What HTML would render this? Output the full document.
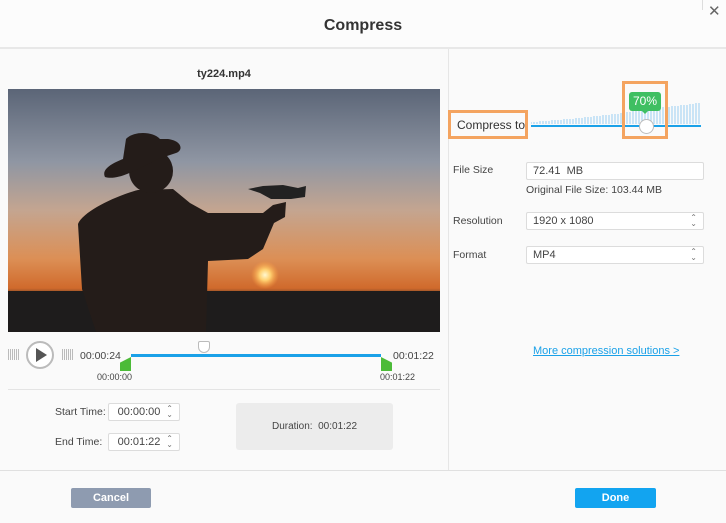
<!DOCTYPE html>
<html><head><meta charset="utf-8"><style>
*{box-sizing:border-box;margin:0;padding:0}
body{width:726px;height:523px;background:#fafafa;font-family:"Liberation Sans",sans-serif;position:relative;overflow:hidden;color:#333}
.a{position:absolute}
.t{font-size:10.5px;color:#444}
.in{position:absolute;background:#fff;border:1px solid #dcdcdc;border-radius:2px;font-size:11px;color:#444;padding-left:6px;line-height:16px}
.sp{position:absolute;right:6px;top:2px;font-size:8px;color:#777;line-height:6px}
</style></head><body>
<div class="a" style="left:0;top:0;width:726px;height:47px;background:#fcfcfc"></div>
<div class="a" style="left:702px;top:0;width:1px;height:10px;background:#ddd"></div>
<div class="a" style="left:708px;top:2px;font-size:15px;color:#666">✕</div>
<div class="a" style="left:0;top:17px;width:726px;text-align:center;font-size:16px;font-weight:bold;color:#333">Compress</div>
<div class="a" style="left:0;top:47px;width:726px;height:2px;background:#e8e8e8"></div>
<div class="a" style="left:448px;top:49px;width:1px;height:422px;background:#e6e6e6"></div>
<div class="a" style="left:0;top:470px;width:726px;height:1px;background:#e0e0e0"></div>
<div class="a" style="left:0;top:68px;width:448px;text-align:center;font-size:11px;font-weight:bold;color:#333">ty224.mp4</div>

<svg class="a" style="left:8px;top:89px" width="432" height="243" viewBox="0 0 432 243">
<defs><linearGradient id="g" x1="0" y1="0" x2="0" y2="1">
<stop offset="0" stop-color="#5b6577"/><stop offset="0.3" stop-color="#8f96a3"/><stop offset="0.5" stop-color="#c4a590"/><stop offset="0.7" stop-color="#dc8f55"/><stop offset="0.82" stop-color="#d06a2c"/><stop offset="0.86" stop-color="#3a2a22"/><stop offset="1" stop-color="#1c1a1a"/></linearGradient>
<radialGradient id="s"><stop offset="0" stop-color="#fff8d0"/><stop offset="0.4" stop-color="#ffd070"/><stop offset="1" stop-color="#ffa040" stop-opacity="0"/></radialGradient></defs>
<rect width="432" height="243" fill="url(#g)"/>
<rect y="202" width="432" height="41" fill="#1e1c1c"/>
<circle cx="257" cy="186" r="14" fill="url(#s)"/>
<path d="M70,135 C75,122 110,106 130,101 L165,100 L182,114 L200,124 L255,124 L265,116 L278,113 L277,128 L266,134 L255,160 L240,170 L200,172 L198,243 L88,243 L74,200 Z" fill="#241c19"/>
<ellipse cx="143" cy="82" rx="22" ry="22" fill="#241c19"/>
<path d="M97,88 C93,80 105,74 115,70 L118,50 C125,42 145,42 152,50 L160,50 C175,52 175,62 168,64 L150,70 C130,80 110,92 97,88 Z" fill="#241c19"/>
<path d="M240,100 L255,97 L275,96 L290,99 L298,97 L297,108 L283,110 L263,110 L252,104 Z" fill="#222"/>
</svg>

<div class="a" style="left:8px;top:349px;width:11px;height:11px;background:repeating-linear-gradient(90deg,#bbb 0 1px,transparent 1px 2px)"></div>
<div class="a" style="left:62px;top:349px;width:11px;height:11px;background:repeating-linear-gradient(90deg,#bbb 0 1px,transparent 1px 2px)"></div>
<div class="a" style="left:26px;top:341px;width:28px;height:28px;border-radius:50%;border:2px solid #bbb;background:#fff"></div>
<div class="a" style="left:36px;top:348px;width:0;height:0;border-left:11px solid #555;border-top:7px solid transparent;border-bottom:7px solid transparent"></div>
<div class="a t" style="left:80px;top:350px">00:00:24</div>
<div class="a t" style="left:393px;top:350px">00:01:22</div>
<div class="a" style="left:131px;top:354px;width:250px;height:3px;background:#1aa1e8"></div>
<div class="a" style="left:198px;top:341px;width:12px;height:12px;background:#fff;border:1px solid #bbb;border-radius:2px 2px 6px 6px"></div>
<div class="a" style="left:120px;top:357px;width:11px;height:14px;background:#4cbb38;clip-path:polygon(0 40%,100% 0,100% 100%,0 100%)"></div>
<div class="a" style="left:381px;top:357px;width:11px;height:14px;background:#4cbb38;clip-path:polygon(0 0,100% 40%,100% 100%,0 100%)"></div>
<div class="a t" style="left:97px;top:372px;font-size:9px">00:00:00</div>
<div class="a t" style="left:380px;top:372px;font-size:9px">00:01:22</div>
<div class="a" style="left:8px;top:389px;width:432px;height:1px;background:#e4e4e4"></div>
<div class="a t" style="left:55px;top:406px">Start Time:</div>
<div class="in" style="left:108px;top:403px;width:72px;height:18px;text-align:center;padding:0 10px 0 0">00:00:00<span class="sp">⌃<br>⌄</span></div>
<div class="a t" style="left:55px;top:436px">End Time:</div>
<div class="in" style="left:108px;top:433px;width:72px;height:18px;text-align:center;padding:0 10px 0 0">00:01:22<span class="sp">⌃<br>⌄</span></div>
<div class="a" style="left:236px;top:403px;width:157px;height:47px;background:#ececec;border-radius:3px;font-size:10px;color:#444;text-align:center;line-height:47px">Duration:&nbsp; 00:01:22</div>

<svg class="a" style="left:531px;top:98px" width="170" height="26">
<g stroke="#a9d5f2" stroke-width="1.2">
<path d="M0,26 V24 M3,26V24 M6,26V24 M9,26V23 M12,26V23 M15,26V23 M18,26V23 M21,26V22 M24,26V22 M27,26V22 M30,26V22 M33,26V21 M36,26V21 M39,26V21 M42,26V21 M45,26V20 M48,26V20 M51,26V20 M54,26V19 M57,26V19 M60,26V19 M63,26V18 M66,26V18 M69,26V18 M72,26V17 M75,26V17 M78,26V17 M81,26V16 M84,26V16 M87,26V16 M90,26V15 M93,26V15 M96,26V14 M99,26V14 M102,26V12 M105,26V12 M108,26V12 M111,26V12 M114,26V11 M117,26V11 M120,26V11 M123,26V10 M126,26V10 M129,26V10 M132,26V9 M135,26V9 M138,26V9 M141,26V8 M144,26V8 M147,26V8 M150,26V7 M153,26V7 M156,26V7 M159,26V6 M162,26V6 M165,26V5 M168,26V5"/></g></svg>
<div class="a" style="left:531px;top:125px;width:170px;height:2px;background:#1aa1e8"></div>
<div class="a" style="left:639px;top:119px;width:15px;height:15px;border-radius:50%;background:#fff;border:1px solid #bbb"></div>
<div class="a" style="left:629px;top:92px;width:32px;height:19px;background:#3fbf62;border-radius:3px;color:#fff;font-size:12px;text-align:center;line-height:19px">70%</div>
<div class="a" style="left:641px;top:110px;border-left:4px solid transparent;border-right:4px solid transparent;border-top:4px solid #3fbf62"></div>
<div class="a" style="left:448px;top:110px;width:80px;height:29px;border:3px solid #f4a460"></div>
<div class="a" style="left:622px;top:81px;width:46px;height:58px;border:3px solid #f4a460"></div>
<div class="a" style="left:457px;top:118px;font-size:12px;color:#333">Compress to</div>

<div class="a t" style="left:453px;top:164px">File Size</div>
<div class="in" style="left:526px;top:162px;width:178px;height:18px">72.41&nbsp; MB</div>
<div class="a t" style="left:526px;top:184px;font-size:10.5px">Original File Size: 103.44 MB</div>
<div class="a t" style="left:453px;top:215px">Resolution</div>
<div class="in" style="left:526px;top:212px;width:178px;height:18px">1920 x 1080<span class="sp">⌃<br>⌄</span></div>
<div class="a t" style="left:453px;top:249px">Format</div>
<div class="in" style="left:526px;top:246px;width:178px;height:18px">MP4<span class="sp">⌃<br>⌄</span></div>
<div class="a" style="left:533px;top:345px;font-size:11px;color:#1aa1e8;text-decoration:underline">More compression solutions &gt;</div>

<div class="a" style="left:71px;top:488px;width:80px;height:20px;background:#8e9bb0;border-radius:2px;color:#fff;font-size:11px;font-weight:bold;text-align:center;line-height:20px">Cancel</div>
<div class="a" style="left:575px;top:488px;width:81px;height:20px;background:#12a4f0;border-radius:2px;color:#fff;font-size:11px;font-weight:bold;text-align:center;line-height:20px">Done</div>
</body></html>
